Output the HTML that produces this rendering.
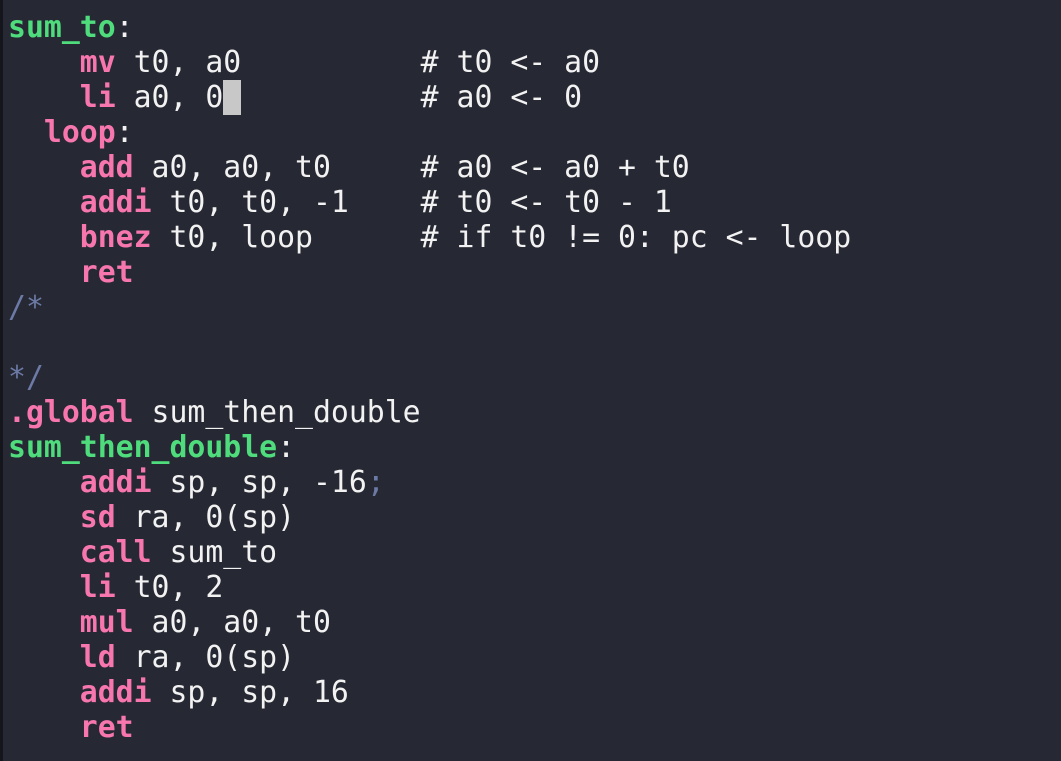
<!DOCTYPE html>
<html><head><meta charset="utf-8"><style>
html,body{margin:0;padding:0;background:#262833;width:1061px;height:761px;overflow:hidden}
body{border-left:3px solid #15161c;box-sizing:border-box}
pre{margin:0;padding:10px 0 0 5px;font-family:"DejaVu Sans Mono","Liberation Mono",monospace;font-size:29.8px;line-height:35px;color:#f2f2f2}
.g{color:#4fdc7c;font-weight:bold}
.p{color:#f776ad;font-weight:bold}
.c{color:#6c7aa6}
.cur{background:#c8c8c8;color:#262833}
</style></head><body><pre><span class="g">sum_to</span>:
    <span class="p">mv</span> t0, a0          # t0 &lt;- a0
    <span class="p">li</span> a0, 0<span class="cur"> </span>          # a0 &lt;- 0
  <span class="p">loop</span>:
    <span class="p">add</span> a0, a0, t0     # a0 &lt;- a0 + t0
    <span class="p">addi</span> t0, t0, -1    # t0 &lt;- t0 - 1
    <span class="p">bnez</span> t0, loop      # if t0 != 0: pc &lt;- loop
    <span class="p">ret</span>
<span class="c">/*</span>

<span class="c">*/</span>
<span class="p">.global</span> sum_then_double
<span class="g">sum_then_double</span>:
    <span class="p">addi</span> sp, sp, -16<span class="c">;</span>
    <span class="p">sd</span> ra, 0(sp)
    <span class="p">call</span> sum_to
    <span class="p">li</span> t0, 2
    <span class="p">mul</span> a0, a0, t0
    <span class="p">ld</span> ra, 0(sp)
    <span class="p">addi</span> sp, sp, 16
    <span class="p">ret</span>
</pre></body></html>
